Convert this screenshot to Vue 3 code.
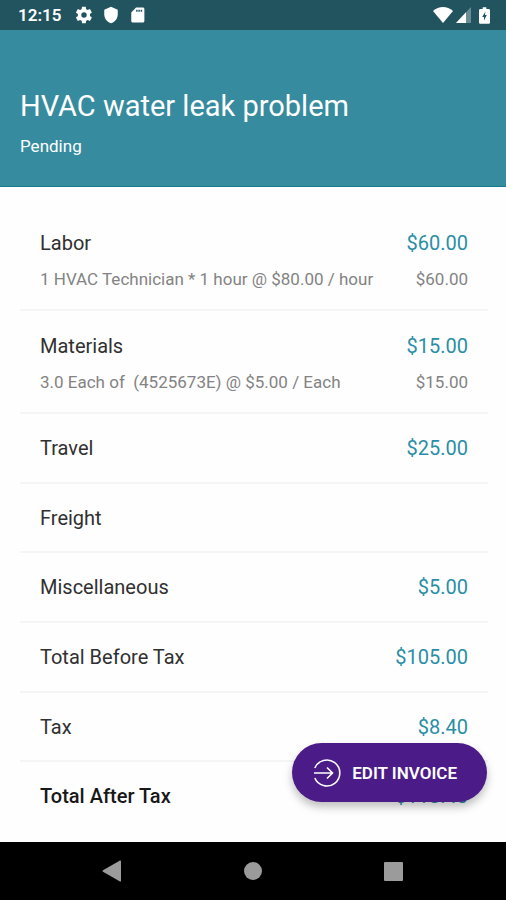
<template>
  <div class="screen">
    <div class="status-bar">
      <div class="status-left">
        <span class="clock">12:15</span>
        <svg width="18" height="18" viewBox="0 0 24 24" aria-hidden="true">
          <path fill="currentColor" fill-rule="evenodd" d="M19.9 13.2c0-.4.1-.8.1-1.200s0-.8-.1-1.200l2.300-1.800c.2-.2.3-.5.1-.8l-2.200-3.800c-.1-.2-.4-.3-.7-.2l-2.700 1.100a8 8 0 0 0-1.900-1.100l-.4-2.900c0-.2-.2-.4-.5-.4H9.800c-.3 0-.5.2-.5.4l-.4 2.900a8 8 0 0 0-1.900 1.100L4.300 4.200c-.3-.1-.6 0-.7.2L1.400 8.200c-.1.300-.1.600.1.800l2.400 1.800c-.1.400-.1.800-.1 1.200s0 .8.1 1.200L1.500 15c-.2.200-.2.500-.1.800l2.200 3.800c.1.200.4.300.7.200L7 18.700a8 8 0 0 0 1.900 1.100l.4 2.900c0 .2.200.4.500.4h4.100c.3 0 .5-.2.500-.4l.4-2.900a8 8 0 0 0 1.900-1.100l2.700 1.100c.3.100.6 0 .7-.2l2.200-3.800c.2-.3.100-.6-.1-.8zM12 15.600a3.600 3.600 0 1 1 0-7.200 3.600 3.600 0 0 1 0 7.200z" />
        </svg>
        <svg width="18" height="18" viewBox="0 0 24 24" aria-hidden="true">
          <path fill="currentColor" d="M12 1L3 5v6c0 5.500 3.800 10.700 9 12 5.200-1.300 9-6.500 9-12V5l-9-4z" />
        </svg>
        <svg width="18" height="18" viewBox="0 0 24 24" aria-hidden="true">
          <path fill="currentColor" d="M18.500 2h-9L3 8.500V20c0 1.100.9 2 2 2h13.500c1.100 0 2-.9 2-2V4c0-1.100-.9-2-2-2z" />
          <path fill="#225460" d="M9.500 5h2v2.500h-2zM12.500 5h2v2.500h-2zM15.500 5h2v2.500h-2z" />
        </svg>
      </div>
      <div class="status-right">
        <svg width="20" height="16" viewBox="0 0 20 16" aria-hidden="true">
          <path fill="currentColor" d="M10 16L0 4C3 1.500 6.500 0 10 0s7 1.500 10 4z" />
        </svg>
        <svg width="15" height="16" viewBox="0 0 15 16" aria-hidden="true">
          <path fill="#6c8c95" d="M15 0v16H0z" />
          <path fill="currentColor" d="M10 5.300V16H0z" />
        </svg>
        <svg class="battery" width="11" height="17" viewBox="0 0 12 18" aria-hidden="true">
          <path fill="currentColor" d="M4 0h4v2h2.500c.8 0 1.500.7 1.500 1.500v13c0 .8-.7 1.500-1.500 1.500h-9C.7 18 0 17.300 0 16.500v-13C0 2.700.7 2 1.500 2H4z" />
          <path fill="#225460" d="M7 4.500L3.500 10.500h2V14.500L8.500 8.500h-2z" />
        </svg>
      </div>
    </div>

    <header class="header">
      <h1>{{ title }}</h1>
      <p>{{ status }}</p>
    </header>

    <main class="invoice">
      <section
        v-for="item in items"
        :key="item.label"
        class="item"
        :class="{ detailed: item.detail, strong: item.strong }"
      >
        <div class="row">
          <span>{{ item.label }}</span>
          <span class="amount">{{ item.amount }}</span>
        </div>
        <div v-if="item.detail" class="row detail">
          <span>{{ item.detail }}</span>
          <span>{{ item.amount }}</span>
        </div>
      </section>
    </main>

    <footer class="bottom">
      <button type="button" class="edit-button">
        <svg width="30" height="30" viewBox="0 0 30 30" fill="none" stroke="currentColor" stroke-width="1.600" aria-hidden="true">
          <path d="M2.800 10a13 13 0 1 1 0 10" />
          <path d="M2 15h18M15 9.500l5.500 5.500-5.500 5.500" />
        </svg>
        EDIT INVOICE
      </button>
      <nav class="nav-bar">
        <button type="button" aria-label="Back">
          <svg width="20" height="22" viewBox="0 0 20 22"><path fill="currentColor" d="M1 10.200L18 .6c.5-.3 1 0 1 .5v19.800c0 .5-.5.800-1 .5L1 11.800c-.6-.4-.6-1.200 0-1.600z" /></svg>
        </button>
        <button type="button" aria-label="Home">
          <svg width="20" height="20" viewBox="0 0 20 20"><circle cx="10" cy="10" r="9" fill="currentColor" /></svg>
        </button>
        <button type="button" aria-label="Recent apps">
          <svg width="22" height="20" viewBox="0 0 22 20"><rect y="1" width="19" height="19" rx="1" fill="currentColor" /></svg>
        </button>
      </nav>
    </footer>
  </div>
</template>

<script setup>
import { ref } from 'vue';

const title = ref('HVAC water leak problem');
const status = ref('Pending');

const items = ref([
  { label: 'Labor', amount: '$60.00', detail: '1 HVAC Technician * 1 hour @ $80.00 / hour' },
  { label: 'Materials', amount: '$15.00', detail: '3.0 Each of  (4525673E) @ $5.00 / Each' },
  { label: 'Travel', amount: '$25.00' },
  { label: 'Freight', amount: '' },
  { label: 'Miscellaneous', amount: '$5.00' },
  { label: 'Total Before Tax', amount: '$105.00' },
  { label: 'Tax', amount: '$8.40' },
  { label: 'Total After Tax', amount: '$113.40', strong: true },
]);
</script>

<style>
body {
  margin: 0;
  background-color: #fefefe;
}
</style>

<style scoped>
.screen {
  display: flex;
  flex-direction: column;
  min-height: 100vh;
  font-family: Roboto, "Liberation Sans", sans-serif;
  color: #303030;
}

.status-bar {
  display: flex;
  justify-content: space-between;
  align-items: center;
  box-sizing: border-box;
  height: 30px;
  padding: 0 16px 0 18px;
  background-color: #225460;
  color: white;
}

.status-left {
  display: flex;
  align-items: center;
  gap: 9px;
}

.clock {
  margin-right: 5px;
  font-size: 17px;
  font-weight: 600;
}

.status-right {
  display: flex;
  align-items: center;
  gap: 3px;
}

.battery {
  margin-left: 5px;
}

.header {
  box-sizing: border-box;
  min-height: 157px;
  padding: 58px 20px 28px;
  border-bottom: 1px solid #147a8c;
  background-color: #368b9f;
  color: white;
}

h1 {
  margin: 0 0 12px;
  font-size: 29px;
  font-weight: 400;
  line-height: 36px;
}

.header p {
  margin: 0;
  font-size: 17px;
  line-height: 20px;
}

.invoice {
  display: flex;
  flex: 1;
  flex-direction: column;
  padding: 21px 18px 10px 20px;
}

.item {
  display: flex;
  flex: 1 0 auto;
  flex-direction: column;
  justify-content: center;
  box-sizing: border-box;
  min-height: 64px;
  padding: 0 20px;
  border-bottom: 2px solid #f5f5f5;
}

.item:last-child {
  border-bottom-color: transparent;
}

.detailed {
  flex: none;
  gap: 12px;
  padding: 23px 20px 18px;
}

.row {
  display: flex;
  justify-content: space-between;
  gap: 16px;
  font-size: 20px;
  line-height: 24px;
  white-space: pre-wrap;
}

.detail {
  font-size: 17px;
  color: #838383;
}

.amount {
  color: #2a8ea6;
}

.strong {
  font-weight: 500;
  color: #181818;
}

.strong .amount {
  font-weight: 400;
}

.bottom {
  position: sticky;
  bottom: 0;
}

.edit-button {
  position: absolute;
  right: 19px;
  bottom: 98px;
  display: flex;
  align-items: center;
  gap: 10px;
  height: 59px;
  padding: 0 30px 0 20px;
  border: none;
  border-radius: 30px;
  background-color: #4b1c87;
  box-shadow: 0 5px 9px rgba(0, 0, 0, 0.25);
  color: white;
  font-family: inherit;
  font-size: 17px;
  font-weight: 600;
  white-space: nowrap;
  cursor: pointer;
}

.nav-bar {
  display: flex;
  justify-content: space-evenly;
  align-items: center;
  height: 58px;
  background-color: black;
}

.nav-bar button {
  display: flex;
  justify-content: center;
  align-items: center;
  width: 60px;
  height: 48px;
  padding: 0;
  border: none;
  background: none;
  color: #9b9b9b;
  cursor: pointer;
}
</style>
